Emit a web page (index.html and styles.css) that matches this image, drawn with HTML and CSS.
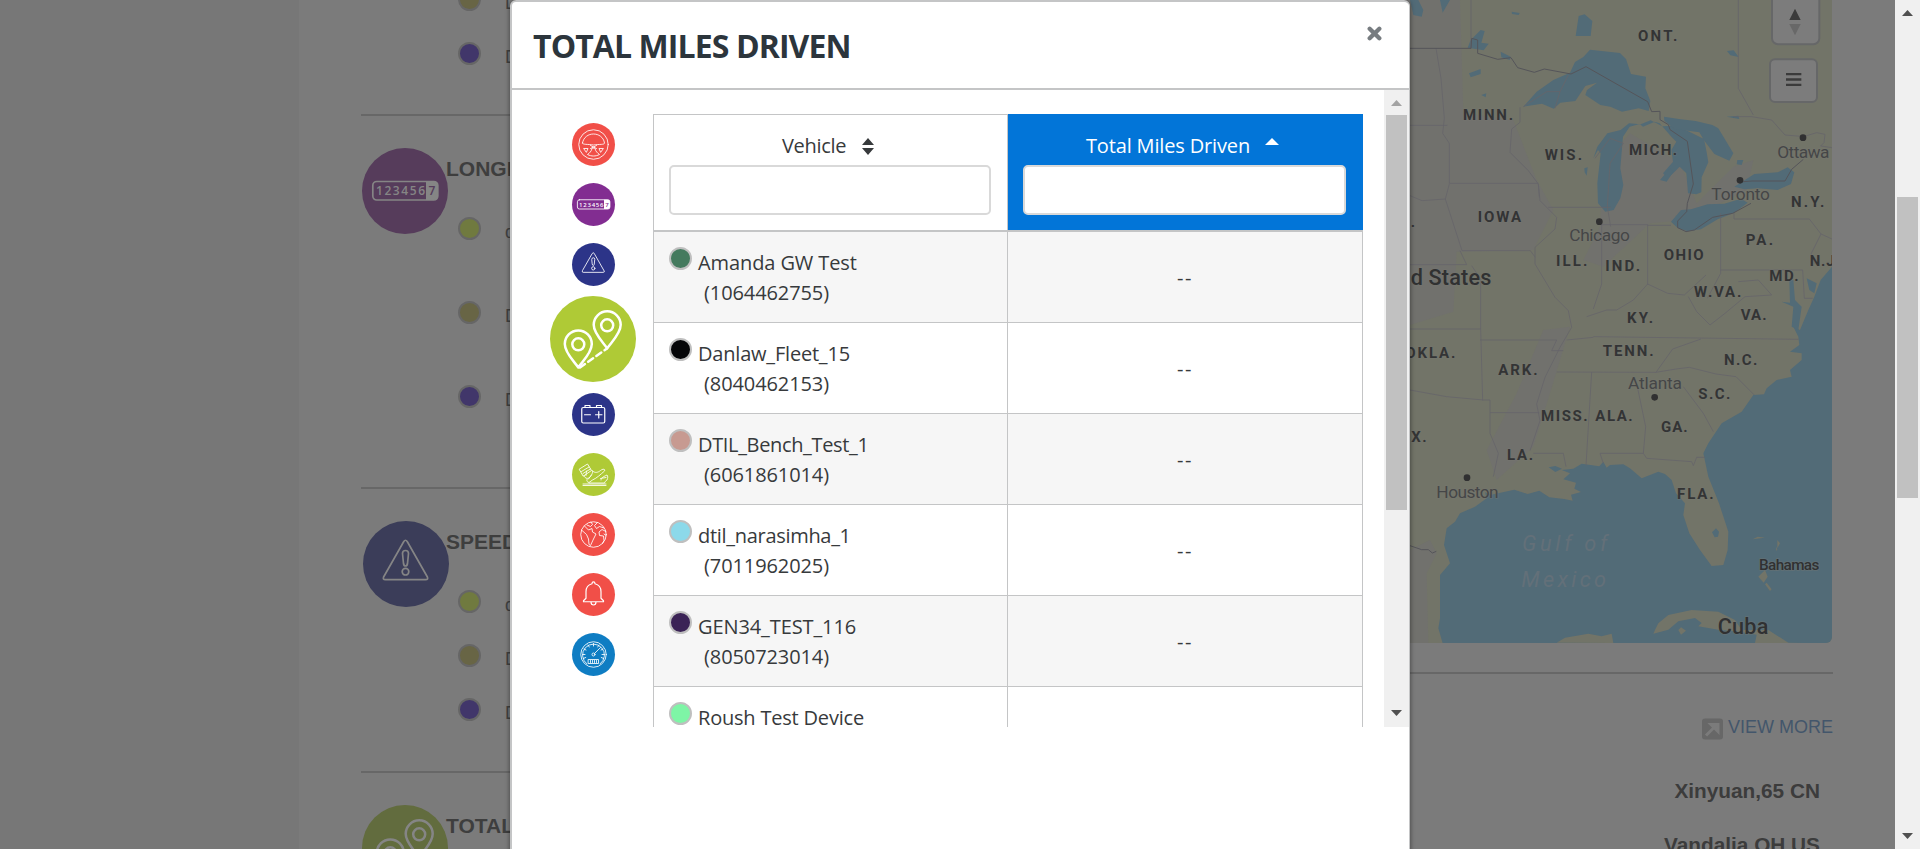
FILE: index.html
```
<!DOCTYPE html>
<html lang="en">
<head>
<meta charset="utf-8">
<title>Total Miles Driven</title>
<link rel="stylesheet" href="styles.css">
</head>
<body>
<svg class="sprite" aria-hidden="true">
  <symbol id="i-wheel" viewBox="0 0 86 86"><g class="ln"><circle cx="43" cy="43" r="29.5"/><path d="M21 40c2-12 12-18 22-18s20 6 22 18c0 4-10 2-22 4-12-2-22 0-22-4z"/><path d="M37 45l12 6M49 45l-12 6M40 51c-1 6-5 9-9 12 8 4 16 4 24 0-4-3-8-6-9-12z"/><path d="M24 51h8l-3 7zM62 51h-8l3 7z"/></g></symbol>
  <symbol id="i-odo" viewBox="0 0 86 86"><rect class="ln" x="10.8" y="33.5" width="65" height="18.5" rx="4"/><path class="solid" d="M64 33.5h8q4 0 4 4v10.500q0 4-4 4h-8z"/><text class="digits" x="14" y="47.2" textLength="49">123456</text><text class="digits last" x="66.5" y="47.2">7</text></symbol>
  <symbol id="i-warn" viewBox="0 0 86 86"><g class="ln"><path d="M40.8 20.5q1.700-2.500 3.400 0l20.200 35.500q1 2.700-1.700 2.700h-40.400q-2.700 0-1.700-2.700z"/><path d="M39.5 32.500q0-3 3-3t3 3l-1 10q-.4 2.500-2 2.500t-2-2.500z"/><circle cx="42.5" cy="50.7" r="3.3"/></g></symbol>
  <symbol id="i-pins" viewBox="0 0 86 86"><g class="ln bold"><path d="M28.3 71.500c-4-6-13.500-14.500-13.500-23.500a13.500 13.500 0 0 1 27 0c0 9-9.500 17.500-13.500 23.500z"/><circle cx="28.3" cy="48.3" r="6"/><path d="M57.2 52.300c-4-6-13.500-14.500-13.500-23.500a13.500 13.500 0 0 1 27 0c0 9-9.500 17.500-13.500 23.500z"/><circle cx="57.2" cy="29.3" r="6"/><path d="M30 71.500L57 52.500" stroke-dasharray="6 4"/></g></symbol>
  <symbol id="i-batt" viewBox="0 0 86 86"><g class="ln thick"><rect x="19.5" y="29" width="46" height="31" rx="3"/><path d="M26 29v-4h10v4M49 29v-4h10v4M25 43.500h12M47 43.500h13M53.500 37v13"/></g></symbol>
  <symbol id="i-foot" viewBox="0 0 86 86"><g class="ln"><path d="M15 32l16-10 8 13-16 11zM19 37l15-9M22 41l15-9M24 45c2 8 10 8 15-1 2-4 3-6 1-9 6 6 12 4 17 0 5-4 10-3 8 1-8 7-15 14-24 18l-7 5c-4-1-5-3-4-6M29 36l-1 9M33 52l5-7M34 60h31c1-3 2-4 5-6 2-4 2-8 0-10-6 3-12 5-12 10M57 51l11-2M22 62h46M22 65h46"/></g></symbol>
  <symbol id="i-globe" viewBox="0 0 86 86"><g class="ln"><circle cx="43" cy="43" r="25.5"/><path d="M25 26l8 8 7-3 1 7 7 4-5 10-6 13-3-2-1-11-4-9-10-9M38 18l3 5-4 4-7-3M51 19l-6 6 4 6 6-4 9 3M68 37l-8-4-6 5 1 7 8 1 1 9-3 6M68 45l-4-3"/></g></symbol>
  <symbol id="i-bell" viewBox="0 0 86 86"><g class="ln thick"><path d="M40 21.500c0-5 6-5 6 0 8 2 12 8 12 16v13l5 5v2h-40v-2l5-5v-13c0-8 4-14 12-16zM38 58q0 6 5 6t5-6"/></g></symbol>
  <symbol id="i-gauge" viewBox="0 0 86 86"><g class="ln"><circle cx="43" cy="43" r="25.5"/><path d="M30 62a22 22 0 1 1 26 0"/><path d="M21 43h5M65 43h-5M24 32l4 2M62 32l-4 2M32 24l2.500 4M54 24l-2.500 4M43 21v5M22.500 51l5-2M63.500 51l-5-2"/><circle cx="43" cy="43" r="3"/><path d="M45 41l12-12M33 53h20v8h-20zM37 55v4M41 55v4M45 55v4M49 55v4"/></g></symbol>
</svg>

<div class="page">
  <div class="content">
    <main class="report">
      <section class="block first">
        <ul class="vehicles"><li><i class="dot olive"></i><span>D</span></li><li><i class="dot violet"></i><span>D</span></li></ul>
      </section>
      <section class="block longest">
        <div class="title"><svg class="badge purple"><use href="#i-odo"/></svg><h2>LONGEST TRIP</h2></div>
        <ul class="vehicles wide"><li><i class="dot lime"></i><span>d</span></li><li><i class="dot olive"></i><span>D</span></li><li><i class="dot violet"></i><span>D</span></li></ul>
      </section>
      <section class="block speeding">
        <div class="title"><svg class="badge navy"><use href="#i-warn"/></svg><h2>SPEEDING</h2></div>
        <ul class="vehicles"><li><i class="dot lime"></i><span>d</span></li><li><i class="dot olive"></i><span>D</span></li><li><i class="dot violet"></i><span>D</span></li></ul>
      </section>
      <section class="block">
        <div class="title"><svg class="badge green"><use href="#i-pins"/></svg><h2>TOTAL MILES</h2></div>
      </section>
    </main>
    <aside class="side">
      <svg class="map" viewBox="30 0 1266 1929">
        <rect class="land" x="30" width="1266" height="1929"/>
        <path class="plain" d="M30 0h150l10 340 150 20 70 180 50 90-60 120-230 5-10 180-130 40zM600 680l10-190 80-90 150 90 50 120 110-110 60-20-20 90-180 90-110 10-140 130-60-20zM430 990l80-10-60 200-50 160-110 100-30-90 90-170zM30 1650l60-30 20 40-30 60 5 209H30z"/>
        <path class="water" d="M1296 800l-34 40-19 50-18 40-25 60-20-10 15 30 3 25-28 20 35 5v20l-35 30 5 20-45 10-30 25-8 18-32 2-35 50-60 35-40 60-15 30 15 70 32 80 28 85-2 55-13 45-35 3-35-48-32-50-18-55 5-35-27-30-13-40-20-18-20-7-50 20-35-30-20-12-40 2-10 8-10-18-12 14-53-8-25 15-35 4 25 10-20 18 38 10-5 18 20 10-30 8 5 18-25-5-45-5-30-20-35 10-40-13-70 15-18-7 5 18-35 25-45 20-15 25-25 20-8 50 18 55-30 35v130l-5 30 23 79h1198z"/>
        <g class="water">
          <path d="M370 320l40-45 50-35 50-22 15-32 25-15 20-22 90 10 18 18 15 45 45 8-2 35 15 38-5 30-30-8-50 10-35-15-30-5-45-30 5-15 30-22-35 10-30 45-45 5-20 18-35-15zM580 475l12-35 30-40 40-10 25-20 35 3 30-12 35 18 35-2 40 15 50 25 8 40 5 30-20 45-1 45-15 6-25-3-5-60-20-20-35 35-15-15 30-35-5-35 15-25-15-15-35-40-15-5-35 15-10-8-30 8-20 30-3 35-5 60 9 50-9 40-20 35-25 5-22-25-2-60 10-90-8-10z"/>
          <path d="M792 350l50 8 45 5 50 12 18 10 45 75-12 22-45-20-30-40-15-25-75-10-30-25zM1012 480h18l-5 15-15-2zM1003 560l60-38 70-5 30-15 20 15-10 35-40 18-60-5-40 3zM813 665l30-35 30-2 50-15 50-2 50-15 20 12-40 30-50 20-50 30-40 6-30-10z"/>
          <path d="M30 0h25l15 30-5 20-25-5zM120 0h30l-22 38zM335 35l24 4-3 6-20-3zM536 48l18-5 23 20-5 45-45 0zM212 120l30-30 12 3-10 35 22 3-15 20-48-8zM302 155l30 15-3 10-25-8zM207 220l35-13v15l-30 10zM244 285l15-5-2 12zM981 153l20-2 15 20-25-5zM980 350l35-3 3 10zM553 505l10-3-3 25-6-10zM780 540l30-35 10 10-20 30zM1168 840l12 0 5 60 20 20-10 70-20-10 5-60-35-15 25 3zM1220 835l30 15-7 30-15-10z"/>
        </g>
        <g class="land">
          <path d="M765 1890l10-20 30-25 70-15 80 5 50 25 20 30 80 0 60 38 45 1h-145l5-25-60-10-55-5-60-10 10-10-20-15-50 10-30 25-45 12zM470 1928l25-15 70-12 40 8 30-8 5 28zM835 1890l8-8 15 10-15 12zM1075 1730l20-20 8 20-12 18zM1100 1748l15 20-5 5-15-20zM1058 1618l15-8 22 3zM1132 1620l8 10-8 15zM1128 1640l4 8-3 6z"/>
        </g>
        <path class="water" d="M936 1597l12-12 9 10-3 15-10 2zM446 1402l20-4 20 8-20 10z"/>
        <g class="state">
          <path d="M30 376h112M213 0v145M108 145l15 90 10 120-5 45 20 30v120h267M148 552l-12 45-70 5-36-15M136 597l50 155h205l15 20M180 752l20 42H30M215 797l27 40v150H30M242 987l6 215M240 1020h230l-15 32h35M360 322v45l-25 20-5 70 55 55 30 40 5 50 50 50-5 35-60 55 0 50 60 100 40 40 10 50-35 60-45 90-25 80 10 50-30 90M445 622h187M415 552l3 40M605 672v180l-25 75M605 674h138v180M743 676h70M560 950l60-20 30 0 50-30 43-48 60 28 50 5 65-60M962 640v180l-40 75M962 810h246l5 85h25M1002 640v17h226l35 45-30 60 12 30M1015 845l60-5 40 45-80 5-60 50-45 35-40-40-25-45M1000 350l55 0 60 10 40 45 60 5M1015 0v265l45 80M1263 702l33 15M580 1010l616 8M500 1020l80-8M470 1116l298 1 50-70 85-30M768 1117l60-10 40-5 80 20 60 8 55 55M850 1160l60 80 30 55M575 1116l-17 280M712 1160l25 120-7 80 10 15 135 10 5 12 10-25 25 0M600 1360h130M400 1360h90l8 40M600 1360l10 30M270 1238h148M30 1170l110 20 110 10 20 0v100l25 60-15 70M370 320l70-45 40 0 25-50M465 325l15-50M585 475l45-60 40 15-40 60-8 130 10 60"/>
        </g>
        <path class="nation" d="M30 145h183l2-30 18 5v40l60 18 40-5 20 30 50 14 30-10 80 15 45-22 185 105 12 30 25-1 0 25 25 15 5 15 52 35 18 128-18 58-2 25-27 28v20l25 12 25-5 55-38 60-12 55-30M1030 545l25-2h100l20-35 35-30M30 1637l35 12h20l12 10 12-5"/>
        <path class="state" d="M1210 410l40-12 25 5-3 25-10 10 34 5"/>
        <g class="st">
          <text x="714" y="124" textLength="118">ONT.</text><text x="189" y="361" textLength="150">MINN.</text><text x="434" y="480" textLength="112">WIS.</text><text x="687" y="465" textLength="144">MICH.</text><text x="233" y="665" textLength="130">IOWA</text><text x="468" y="797" textLength="94">ILL.</text><text x="616" y="812" textLength="104">IND.</text><text x="791" y="780" textLength="120">OHIO</text><text x="1037" y="735" textLength="82">PA.</text><text x="1173" y="620" textLength="100">N.Y.</text><text x="1229" y="797" textLength="90">N.J.</text><text x="1108" y="843" textLength="88">MD.</text><text x="882" y="891" textLength="142">W.VA.</text><text x="1022" y="960" textLength="78">VA.</text><text x="681" y="970" textLength="78">KY.</text><text x="608" y="1068" textLength="153">TENN.</text><text x="972" y="1096" textLength="100">N.C.</text><text x="295" y="1125" textLength="118">ARK.</text><text x="895" y="1198" textLength="96">S.C.</text><text x="423" y="1263" textLength="140">MISS.</text><text x="586" y="1264" textLength="112">ALA.</text><text x="783" y="1295" textLength="80">GA.</text><text x="321" y="1379" textLength="78">LA.</text><text x="831" y="1496" textLength="110">FLA.</text><text x="16" y="1075" textLength="150">OKLA.</text><text x="34" y="1327" textLength="46">X.</text><text x="32" y="680">.</text>
        </g>
        <g class="city">
          <text x="1132" y="473" textLength="156">Ottawa</text><text x="934" y="600" textLength="176">Toronto</text><text x="508" y="724" textLength="182">Chicago</text><text x="684" y="1166" textLength="162">Atlanta</text><text x="109" y="1493" textLength="187">Houston</text>
        </g>
        <g class="pt"><circle cx="1209" cy="413" r="10"/><circle cx="1020" cy="541" r="10"/><circle cx="598" cy="665" r="10"/><circle cx="764" cy="1192" r="10"/><circle cx="201" cy="1433" r="10"/></g>
        <text class="country" x="32" y="856" textLength="242">d States</text>
        <text class="country" x="953" y="1901" textLength="152">Cuba</text>
        <text class="country small" x="1077" y="1710" textLength="181">Bahamas</text>
        <text class="sea" x="366" y="1654" textLength="256">Gulf of</text><text class="sea" x="364" y="1761" textLength="254">Mexico</text>
        <g class="ctl"><rect x="1116" y="-30" width="142" height="163" rx="18"/><rect x="1110" y="178" width="141" height="128" rx="15"/></g>
        <path fill="#3b3b3b" d="M1185 26l17 34h-34zM1158 219h46v7h-46zM1158 235h46v7h-46zM1158 251h46v7h-46z"/><path fill="#686868" d="M1185 106l17-34h-34z"/>
      </svg>
      <div class="places">
        <div class="more"><svg viewBox="0 0 21 21"><rect width="21" height="21" rx="3" fill="#676767"/><path d="M4 17l8-8M9 6h7v7z" stroke="#7b7b7b" stroke-width="3" fill="#7b7b7b"/></svg><span>VIEW MORE</span></div>
        <p>Xinyuan,65 CN</p><p>Vandalia,OH US</p>
      </div>
    </aside>
  </div>
  <div class="bar page-bar"><i class="up dark"></i><i class="thumb"></i><i class="down dark"></i></div>
</div>

<div class="modal">
  <header class="modal-head"><h1>TOTAL MILES DRIVEN</h1><svg class="close" viewBox="0 0 14 14"><path d="M2.500 2.500l9 9M11.500 2.500l-9 9"/></svg></header>
  <div class="modal-body">
    <nav class="icons">
      <svg class="red"><use href="#i-wheel"/></svg><svg class="purple"><use href="#i-odo"/></svg><svg class="navy"><use href="#i-warn"/></svg><svg class="green active"><use href="#i-pins"/></svg><svg class="navy"><use href="#i-batt"/></svg><svg class="green"><use href="#i-foot"/></svg><svg class="red"><use href="#i-globe"/></svg><svg class="red"><use href="#i-bell"/></svg><svg class="blue"><use href="#i-gauge"/></svg>
    </nav>
    <div class="table">
      <div class="row head">
        <div class="th"><div class="label"><span class="vehicle-label">Vehicle</span><svg class="sort" viewBox="0 0 12 17"><path d="M0 7l6-7 6 7zM0 10l6 7 6-7z"/></svg></div><input aria-label="Vehicle"></div>
        <div class="th sorted"><div class="label"><span class="miles-label">Total Miles Driven</span><svg class="caret" viewBox="0 0 14 7"><path d="M0 7l7-7 7 7z"/></svg></div><input aria-label="Total Miles Driven"></div>
      </div>
      <div class="row"><div class="td"><i class="dot c1"></i><div class="name"><span class="n1">Amanda GW Test</span><span class="id">(1064462755)</span></div></div><div class="td val">--</div></div>
      <div class="row"><div class="td"><i class="dot c2"></i><div class="name"><span class="n2">Danlaw_Fleet_15</span><span class="id">(8040462153)</span></div></div><div class="td val">--</div></div>
      <div class="row"><div class="td"><i class="dot c3"></i><div class="name"><span class="n3">DTIL_Bench_Test_1</span><span class="id">(6061861014)</span></div></div><div class="td val">--</div></div>
      <div class="row"><div class="td"><i class="dot c4"></i><div class="name"><span class="n4">dtil_narasimha_1</span><span class="id">(7011962025)</span></div></div><div class="td val">--</div></div>
      <div class="row"><div class="td"><i class="dot c5"></i><div class="name"><span class="n5">GEN34_TEST_116</span><span class="id">(8050723014)</span></div></div><div class="td val">--</div></div>
      <div class="row"><div class="td"><i class="dot c6"></i><div class="name"><span class="n6">Roush Test Device</span></div></div><div class="td val"></div></div>
    </div>
    <div class="bar modal-bar"><i class="up"></i><i class="thumb"></i><i class="down dark"></i></div>
  </div>
</div>
</body>
</html>
```
FILE: styles.css
```
* { box-sizing: border-box; }
html, body { margin: 0; height: 849px; overflow: hidden; }
h1, h2, p, ul { margin: 0; padding: 0; }
body { font-family: "Liberation Sans", Arial, sans-serif; background: #777; }
.sprite { display: none; }

/* icon strokes */
.ln { fill: none; stroke: currentColor; stroke-width: 1.7; stroke-linejoin: round; stroke-linecap: round; }
.ln.thick { stroke-width: 2.4; }
.ln.bold { stroke-width: 2.5; }
.solid { fill: currentColor; }
.digits { font: 600 12px "Open Sans", sans-serif; fill: currentColor; }
.digits.last { fill: var(--disc); }

/* dimmed page */
.page { display: flex; height: 849px; }
.content { flex: 1; display: flex; justify-content: space-between; margin-left: 299px; padding: 0 62px; background: #7b7b7b; overflow: hidden; }
.report { width: 400px; }
.block { border-top: 2px solid #676767; padding-top: 32px; }
.block.first { border: 0; padding: 0; height: 114px; overflow: hidden; }
.block.first .vehicles { margin-top: -12px; }
.longest { height: 373px; }
.speeding { height: 284px; }
.title { display: flex; height: 69px; color: #858585; }
.title h2 { font-size: 21px; line-height: 24px; padding-top: 9px; margin-left: -2px; color: #3e3e3e; white-space: nowrap; }
.badge { width: 86px; height: 86px; flex: none; border-radius: 50%; background: var(--disc); margin-left: 1px; }
.badge.purple { --disc: #563c5b; }
.badge.navy { --disc: #3b3d59; margin-left: 2px; margin-right: -1px; }
.badge.green { --disc: #626c3e; }
.vehicles { list-style: none; padding-left: 97px; }
.vehicles li { display: flex; height: 54px; gap: 24px; font-size: 18px; line-height: 31px; color: #414141; }
.vehicles.wide li { height: 84px; }
.dot { display: block; width: 23px; height: 23px; flex: none; border-radius: 50%; border: 2px solid #bfbfbf; }
.vehicles .dot { border-color: #666; }
.dot.olive { background: #686545; }
.dot.violet { background: #41366a; }
.dot.lime { background: #707a3f; }

.side { width: 472px; display: flex; flex-direction: column; align-items: flex-end; }
.map { width: 422px; height: 643px; flex: none; margin-right: 1px; border-radius: 0 0 6px 0; }
.map .land { fill: #727468; }
.plain { fill: #71716d; }
.water { fill: #526b77; }
.state { fill: none; stroke: #66656a; stroke-width: 2.5; stroke-linejoin: round; }
.nation { fill: none; stroke: #55555a; stroke-width: 3; stroke-linejoin: round; }
.map text { font-family: Roboto, sans-serif; paint-order: stroke; stroke: #7777726e; stroke-width: 5px; }
.st text { font-size: 45px; font-weight: 700; fill: #333435; }
.city text { font-size: 52px; fill: #454647; }
.pt { fill: #303031; }
.map .country { font-size: 65px; font-weight: 500; fill: #303132; }
.map .country.small { font-size: 46px; }
.map .sea { font-size: 65px; font-style: italic; fill: #637079; stroke: none; }
.ctl { fill: #7c7c7c; stroke: #666768; stroke-width: 6; }
.places { width: 472px; flex: none; margin-top: 29px; border-top: 2px solid #676767; padding-top: 43px; text-align: right; }
.more { display: flex; justify-content: flex-end; gap: 5px; height: 72px; font-size: 18px; line-height: 21px; color: #43566b; }
.more svg { width: 21px; height: 22px; margin-top: 1px; }
.places p { height: 54px; padding-right: 13px; font-size: 20.8px; line-height: 24px; font-weight: 700; color: #3c3c3c; position: relative; top: -10px; }

/* scrollbars */
.bar { display: flex; flex-direction: column; background: #f0f0f0; flex: none; }
.bar i { display: block; }
.thumb { background: #c1c1c1; margin: 0 2px; }
.up, .down { width: 11px; height: 6px; background: #a3a3a3; align-self: center; }
.up { clip-path: polygon(50% 0, 100% 100%, 0 100%); }
.down { clip-path: polygon(0 0, 100% 0, 50% 100%); margin-top: auto; }
.dark { background: #505050; }
.page-bar { width: 25px; padding: 10px 0; }
.page-bar .thumb { height: 301px; margin-top: 181px; }
.modal-bar { width: 25px; height: 637px; padding: 10px 0 11px; margin-right: -1px; }
.modal-bar .thumb { height: 395px; margin-top: 9px; }

/* dialog */
.modal { position: absolute; left: 510px; top: 0; width: 900px; height: 870px; background: #fff; border: 2px solid #c4c5c6; border-right-width: 1px; border-radius: 6px; box-shadow: 0 0 5px rgba(0,0,0,.5); color: #373a3c; font-family: "Open Sans", "Noto Sans", sans-serif; }
.modal-head { display: flex; justify-content: space-between; height: 88px; border-bottom: 2px solid #c4c5c6; padding: 22px 27px 0 21px; }
.modal-head h1 { font-size: 32px; line-height: 44px; font-weight: 700; letter-spacing: -.9px; color: #2c353c; }
.close { width: 15px; height: 15px; margin-top: 2px; }
.close path { stroke: #777c80; stroke-width: 4; stroke-linecap: round; }
.modal-body { display: flex; height: 637px; overflow: hidden; }
.icons { width: 141px; flex: none; display: flex; flex-direction: column; gap: 17px; padding-top: 33px; padding-left: 22px; align-items: center; color: #fff; }
.icons svg { width: 43px; height: 43px; flex: none; border-radius: 50%; background: var(--disc); }
.icons .active { width: 86px; height: 86px; margin: -7px 2px -6px 0; }
.red { --disc: #f14f48; }
.purple { --disc: #822d91; }
.navy { --disc: #2c3488; }
.green { --disc: #afca36; }
.blue { --disc: #0f7dc3; }
.table { width: 710px; flex: none; margin: 24px 21px 0 0; border-left: 1px solid #c4c5c6; border-right: 1px solid #c4c5c6; border-top: 1px solid #c4c5c6; height: 690px; }
.row { display: grid; grid-template-columns: 354px 354px; height: 91px; border-bottom: 1px solid #c4c5c6; font-size: 20px; line-height: 30px; }
.row:nth-child(even) { background: #f6f6f6; }
.row > div:first-child { border-right: 1px solid #c4c5c6; }
.head { height: 117px; border-bottom: 2px solid #c4c5c6; }
.th { padding: 16px 16px 0 15px; }
.th.sorted { background: #0275d8; color: #fff; margin: -1px -1px 0 0; padding: 17px 17px 0 15px; }
.label { display: flex; height: 34px; justify-content: center; padding-right: 4px; }
.label svg { fill: currentColor; flex: none; }
.sort { width: 12px; height: 17px; margin: 7px 0 0 16px; }
.caret { width: 14px; height: 7px; margin: 7px 0 0 15px; }
.vehicle-label { letter-spacing: -.3px; }
.miles-label { letter-spacing: -.15px; }
input { display: block; width: 100%; height: 50px; border: 2px solid #d9d9d9; border-radius: 5px; background: #fff; }
.td { display: flex; padding: 15px 15px; }
.name { display: flex; flex-direction: column; margin-left: 6px; padding-top: 1px; white-space: nowrap; }
.n1, .n5 { letter-spacing: -.1px; }
.n2, .n6 { letter-spacing: -.2px; }
.n3 { letter-spacing: -.35px; }
.n4 { letter-spacing: -.3px; }
.id { padding-left: 6px; letter-spacing: -.1px; }
.td.val { justify-content: center; padding-top: 31px; letter-spacing: 1.5px; }
.c1 { background: #447a5e; }
.c2 { background: #050608; }
.c3 { background: #c79a91; }
.c4 { background: #8cd9ea; }
.c5 { background: #3b2356; }
.c6 { background: #7ef5a6; }
```
